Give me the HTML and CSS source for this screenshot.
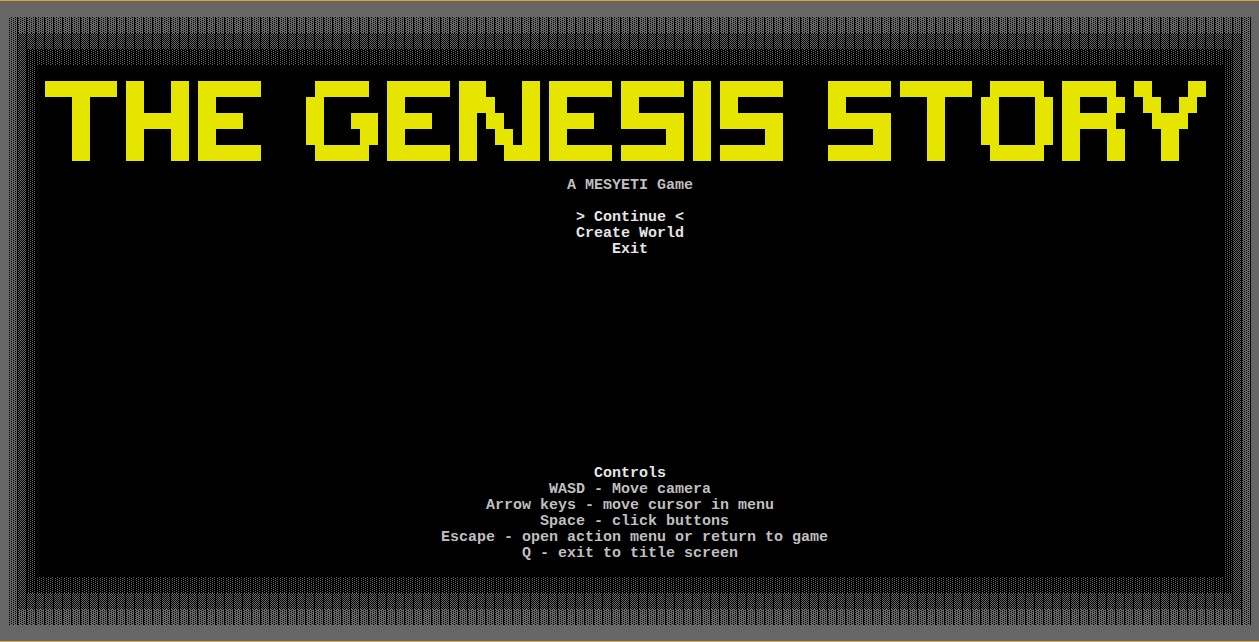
FILE: index.html
```html
<!DOCTYPE html>
<html lang="en">
<head>
<meta charset="utf-8">
<title>The Genesis Story</title>
<link rel="stylesheet" href="styles.css">
</head>
<body>
<div class="screen">
<div class="shade shade-dark">
<div class="shade shade-medium">
<div class="shade shade-light">
<main class="content">
<h1 class="banner" aria-label="The Genesis Story">
<span class="word">
<span class="letter"><b>████████</b>
   <b>██</b>
   <b>██</b>
   <b>██</b>
   <b>██</b></span>
<span class="letter"><b>██</b>   <b>██</b>
<b>██</b>   <b>██</b>
<b>███████</b>
<b>██</b>   <b>██</b>
<b>██</b>   <b>██</b></span>
<span class="letter"><b>███████</b>
<b>██</b>
<b>█████</b>
<b>██</b>
<b>███████</b></span>
</span>
<span class="word">
<span class="letter"> <b>██████</b>
<b>██</b>
<b>██</b>   <b>███</b>
<b>██</b>    <b>██</b>
 <b>██████</b></span>
<span class="letter"><b>███████</b>
<b>██</b>
<b>█████</b>
<b>██</b>
<b>███████</b></span>
<span class="letter"><b>███</b>    <b>██</b>
<b>████</b>   <b>██</b>
<b>██</b> <b>██</b>  <b>██</b>
<b>██</b>  <b>██</b> <b>██</b>
<b>██</b>   <b>████</b></span>
<span class="letter"><b>███████</b>
<b>██</b>
<b>█████</b>
<b>██</b>
<b>███████</b></span>
<span class="letter"><b>███████</b>
<b>██</b>
<b>███████</b>
     <b>██</b>
<b>███████</b></span>
<span class="letter"><b>██</b>
<b>██</b>
<b>██</b>
<b>██</b>
<b>██</b></span>
<span class="letter"><b>███████</b>
<b>██</b>
<b>███████</b>
     <b>██</b>
<b>███████</b></span>
</span>
<span class="word">
<span class="letter"><b>███████</b>
<b>██</b>
<b>███████</b>
     <b>██</b>
<b>███████</b></span>
<span class="letter"><b>████████</b>
   <b>██</b>
   <b>██</b>
   <b>██</b>
   <b>██</b></span>
<span class="letter"> <b>██████</b>
<b>██</b>    <b>██</b>
<b>██</b>    <b>██</b>
<b>██</b>    <b>██</b>
 <b>██████</b></span>
<span class="letter"><b>██████</b>
<b>██</b>   <b>██</b>
<b>██████</b>
<b>██</b>   <b>██</b>
<b>██</b>   <b>██</b></span>
<span class="letter"><b>██</b>    <b>██</b>
 <b>██</b>  <b>██</b>
  <b>████</b>
   <b>██</b>
   <b>██</b></span>
</span>
</h1>
<p class="line">A MESYETI Game</p>
<nav class="menu">
<button class="item" type="button">&gt; Continue &lt;</button>
<button class="item" type="button">Create World</button>
<button class="item" type="button">Exit</button>
</nav>
<section class="controls">
<h2 class="heading">Controls</h2>
<p class="line">WASD - Move camera</p>
<p class="line">Arrow keys - move cursor in menu</p>
<p class="line">&nbsp;Space - click buttons</p>
<p class="line">&nbsp;Escape - open action menu or return to game</p>
<p class="line">Q - exit to title screen</p>
</section>
</main>
</div>
</div>
</div>
</div>
</body>
</html>
```

FILE: styles.css
```css
* {
  box-sizing: border-box;
}

body {
  margin: 0;
  background: #000;
  color: #bfbfbf;
  font: 15px/16px "Liberation Mono", monospace;
}

.screen {
  display: flex;
  min-height: 100vh;
  padding: 16px 8px 16px 9px;
  border-top: 1px solid #e0a52d;
  border-bottom: 1px solid #e0a845;
  background: #666;
}

/* Each shade is one ring of 9x16 character cells; the ninth column is blank. */
.shade {
  display: flex;
  flex: 1;
  padding: 16px 9px;
  background-color: #000;
  background-size: 9px 2px;
}

.shade-dark {
  background-image: url("data:image/svg+xml,%3Csvg xmlns='http://www.w3.org/2000/svg' width='9' height='2' shape-rendering='crispEdges'%3E%3Cpath fill='%23666' d='M0 0h2v1H0zM3 0h3v1H3zM7 0h1v1H7zM1 1h3v1H1zM5 1h3v1H5z'/%3E%3C/svg%3E");
}

.shade-medium {
  background-image: url("data:image/svg+xml,%3Csvg xmlns='http://www.w3.org/2000/svg' width='9' height='2' shape-rendering='crispEdges'%3E%3Cpath fill='%23666' d='M1 0h1v1H1zM3 0h1v1H3zM5 0h1v1H5zM7 0h1v1H7zM0 1h1v1H0zM2 1h1v1H2zM4 1h1v1H4zM6 1h1v1H6z'/%3E%3C/svg%3E");
}

.shade-light {
  background-image: url("data:image/svg+xml,%3Csvg xmlns='http://www.w3.org/2000/svg' width='9' height='2' shape-rendering='crispEdges'%3E%3Cpath fill='%23666' d='M3 0h1v1H3zM7 0h1v1H7zM1 1h1v1H1zM5 1h1v1H5z'/%3E%3C/svg%3E");
}

.content {
  display: flex;
  flex: 1;
  flex-direction: column;
  align-items: center;
  gap: 16px;
  padding: 16px 0 15px;
  background: #000;
}

.banner {
  display: flex;
  gap: 45px;
  margin: 0 0 1px;
  padding-right: 9px;
  color: #e5e500;
  font-size: 15px;
  font-weight: 400;
}

.word {
  display: flex;
  gap: 9px;
}

.letter {
  white-space: pre;
}

/* A solid run of blocks, filled so no seams show between cells. */
.letter b {
  display: inline-block;
  height: 16px;
  overflow: hidden;
  vertical-align: top;
  background: #e5e500;
  font-weight: 400;
}

.line,
.heading {
  margin: 0;
  font-size: 15px;
  font-weight: 700;
}

.menu,
.controls {
  display: flex;
  flex-direction: column;
  align-items: center;
}

.controls {
  margin-top: auto;
}

.item {
  padding: 0;
  border: 0;
  background: none;
  font: inherit;
  font-weight: 700;
}

.item,
.heading {
  color: #e5e5e5;
}
```
